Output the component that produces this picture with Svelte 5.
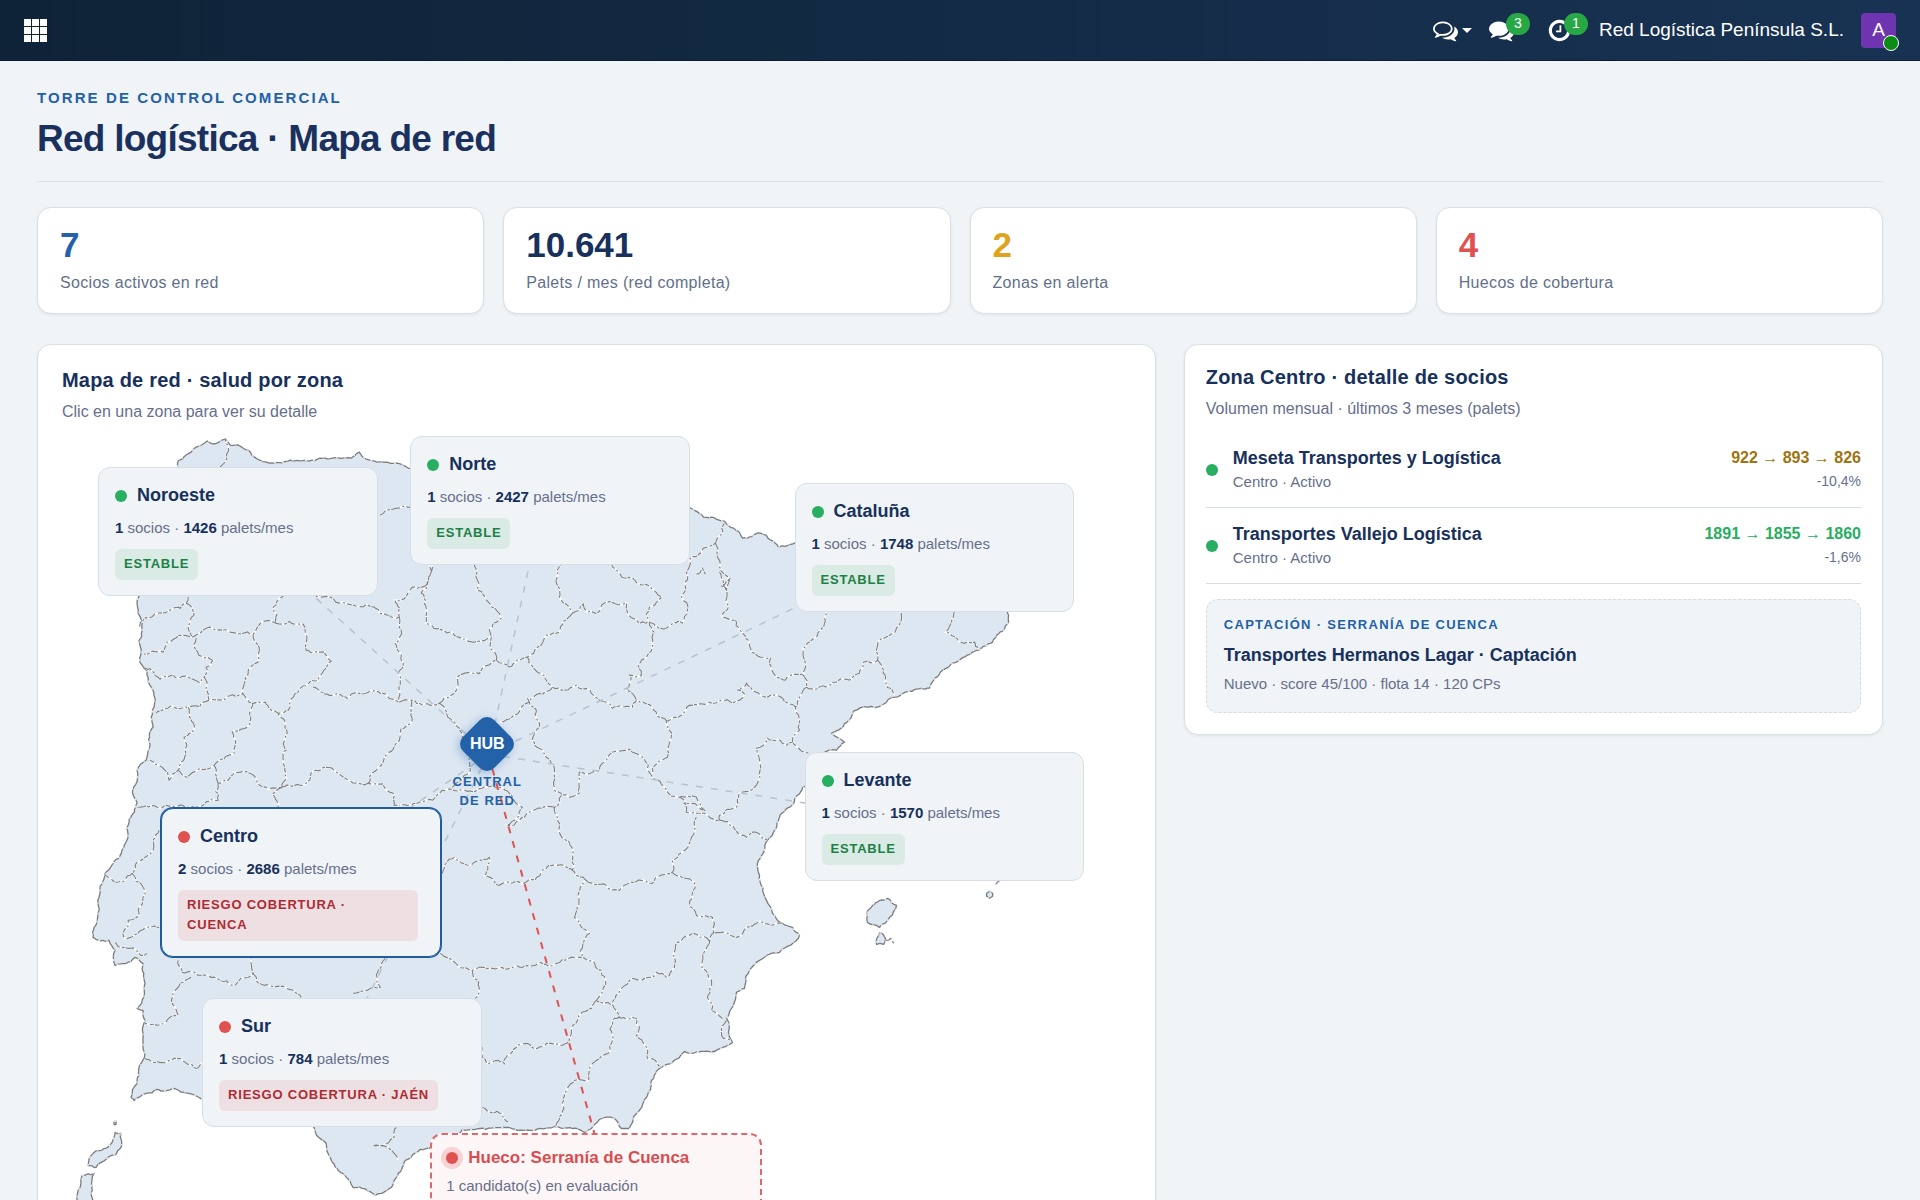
<script>
	// visible part of the map, in map units
	const view = { x: 63, y: 424, w: 1068, h: 850 };
	const hub = { x: 489, y: 754 };

	const stats = [
		{ value: '7', label: 'Socios activos en red', tone: 'blue' },
		{ value: '10.641', label: 'Palets / mes (red completa)', tone: 'navy' },
		{ value: '2', label: 'Zonas en alerta', tone: 'amber' },
		{ value: '4', label: 'Huecos de cobertura', tone: 'red' }
	];

	const zones = [
		{ name: 'Noroeste', x: 99, y: 467, socios: 1, palets: 1426, tag: 'Estable', tone: 'ok' },
		{ name: 'Norte', x: 411, y: 436, socios: 1, palets: 2427, tag: 'Estable', tone: 'ok' },
		{ name: 'Cataluña', x: 795, y: 483, socios: 1, palets: 1748, tag: 'Estable', tone: 'ok' },
		{ name: 'Levante', x: 805, y: 752, socios: 1, palets: 1570, tag: 'Estable', tone: 'ok' },
		{ name: 'Centro', x: 162, y: 808, socios: 2, palets: 2686, tag: 'Riesgo cobertura · Cuenca', tone: 'risk' },
		{ name: 'Sur', x: 203, y: 998, socios: 1, palets: 784, tag: 'Riesgo cobertura · Jaén', tone: 'risk' }
	];

	const links = [
		[246, 534],
		[550, 473],
		[935, 541],
		[944, 824],
		[302, 882],
		[342, 1050]
	];

	const partners = [
		{ name: 'Meseta Transportes y Logística', meta: 'Centro · Activo', trend: '922 → 893 → 826', delta: '-10,4%', tone: 'down' },
		{ name: 'Transportes Vallejo Logística', meta: 'Centro · Activo', trend: '1891 → 1855 → 1860', delta: '-1,6%', tone: 'flat' }
	];

	let selected = $state('Centro');

	const coast =
		'179,467 179,461 187,455 197,447 208,441 214,444 226,439 231,445 239,445 249,450 258,459 291,460 310,461 352,458 360,452 367,459 384,462 398,463 409,468 430,470 480,475 540,480 600,490 660,500 691,508 704,517 725,521 734,528 743,538 761,533 771,540 779,547 795,543 830,548 870,560 920,560 960,570 1000,580 1008,613 1009,622 1004,630 993,642 979,650 964,657 943,670 930,688 896,697 868,707 854,711 832,733 845,742 837,750 825,752 822,770 803,787 780,817 768,840 759,860 760,875 767,900 773,913 783,923 793,927 800,935 780,952 757,962 746,977 745,988 737,992 734,1005 727,1018 730,1037 733,1042 723,1047 702,1051 685,1051 673,1062 662,1067 652,1080 647,1097 640,1110 630,1128 622,1128 615,1118 600,1119 592,1128 585,1132 573,1128 555,1126 533,1130 510,1127 463,1129 460,1133 427,1148 406,1160 397,1177 392,1187 376,1195 354,1187 344,1173 331,1157 327,1143 315,1127 300,1115 270,1105 235,1112 215,1105 203,1099 190,1093 158,1089 147,1093 135,1100 132,1097 138,1083 140,1067 145,1058 144,1033 146,1020 144,1010 138,1008 146,983 144,963 136,957 116,965 116,950 110,940 94,937 95,927 100,910 101,890 106,873 120,858 129,837 138,803 138,770 147,760 154,727 155,707 149,677 140,640 138,603 140,596 135,570 128,540 140,500';

	const islands = [
		'867,913 873,905 888,898 897,905 890,917 880,927 868,922',
		'880,932 886,938 884,944 877,944',
		'122,1133 122,1147 108,1158 97,1167 89,1165 95,1152 113,1142 116,1132',
		'83,1175 95,1173 94,1200 90,1215 78,1215 79,1190',
		'990,891 993,893 993,896 990,898 987,896 987,893',
		'115,1121 117,1121 117,1124 115,1124'
	];

	const borders = [
		'189,597 187,603 159,613 140,629',
		'187,603 195,615 189,627 193,637 168,642 164,652 145,654',
		'193,637 210,627 231,632 254,634 262,622 276,623 274,607 283,597',
		'276,623 304,624 307,650 325,652 332,661 319,680 300,690 289,710 279,713 266,702 250,702 244,694 224,700 210,700 189,707 157,713',
		'197,638 197,650 214,660 205,677 210,700',
		'146,668 161,679 187,676 201,683 205,677',
		'254,634 260,647 249,673 244,694',
		'283,597 323,597 346,603 375,607 390,615 400,617 396,600 413,587 423,587 430,565',
		'400,617 402,630 396,643 404,663 399,673 399,702',
		'314,687 348,698 369,692 399,702 413,700 434,705 440,703 452,695 458,677 497,660 492,637 462,638 443,630 427,623 422,593 432,563',
		'475,563 478,590 490,603 502,618 490,630 492,637',
		'497,660 510,667 528,657 547,635 560,632 573,613 560,597 562,563',
		'573,613 584,604 588,612 598,613 605,603 627,603 633,618 647,623 650,607 662,597 633,578 587,563',
		'650,622 683,623 688,610 682,597 687,573 690,560 704,548 716,543 725,523',
		'716,543 720,567 730,580 729,607 723,617 736,620 746,638 761,657 771,658 777,677 786,680 804,675 805,660 804,648 821,630 826,611',
		'720,572 727,590 722,586 731,578',
		'697,574 703,568 706,574',
		'804,675 807,687 796,707 800,730 793,742 809,753',
		'807,687 829,686 850,680 864,662 878,660 880,640 895,633 900,611',
		'878,660 886,677 895,695',
		'955,611 946,632 961,642 975,642 979,649',
		'796,707 767,697 747,683 738,690 745,694 733,703 710,702 690,705 682,715 667,721',
		'650,622 653,643 642,660 642,675 630,675 627,690 637,700 653,708 667,721 671,740 668,757 658,763 652,775',
		'528,657 542,673 553,687 532,698 515,715 500,722',
		'553,687 577,685 600,700 613,708 633,707 637,700',
		'528,698 537,710 533,740 547,757 555,770 555,790 570,797 580,793 580,772 600,770 607,760 630,749 643,757 652,775 667,790 680,797 687,812 702,813 720,820 747,837 757,832 768,840',
		'680,797 697,797 705,810 684,803',
		'720,820 720,815 737,807 742,792 755,787 760,760 757,748 768,738 787,745 793,742',
		'562,795 555,807 560,823 573,848 573,870 587,880 580,897 575,917 590,933 583,957',
		'555,807 530,812 508,825 523,807 513,797 483,788 463,790 443,790 420,802 400,805',
		'440,703 453,720 463,738 470,760 470,773 453,787',
		'443,873 455,857 470,865 490,857 485,875 500,885 525,883 543,870 558,865 573,870',
		'587,880 607,885 620,890 635,882 653,883 673,872 673,860 690,843 697,817',
		'673,872 695,882 690,903 697,915 713,917 715,933 737,937 747,927 763,922 783,923',
		'715,932 710,943 697,934 678,942 675,967 667,977 657,972 645,978 633,978 622,988 613,1004 597,1000 604,987 602,970 593,960 582,957 557,963 540,962 523,967 503,967 473,970 460,967 440,952',
		'710,943 703,968 712,980 708,997 723,1018',
		'613,1004 620,1017 637,1018 637,1035 648,1058 662,1067',
		'620,1017 615,1018 613,1040 610,1052 593,1063 589,1080 575,1080 565,1093 563,1113 556,1126',
		'597,1000 592,1008 578,1020 570,1038 563,1045 547,1043 538,1048 528,1043 508,1055 505,1063 488,1063 483,1047',
		'473,970 480,990 476,998',
		'483,1107 503,1113 510,1122',
		'189,707 195,725 185,737 179,770 170,780 163,767 149,760',
		'179,770 188,777 215,765 235,753 233,732 251,723 254,703',
		'215,765 219,783 235,772 251,773 258,782 283,787 286,767 288,733 279,713',
		'219,783 219,800 197,807 161,808 138,807',
		'283,787 274,793 279,809',
		'283,787 304,785 329,767 354,783 369,783 394,793 395,805 400,805',
		'413,700 413,720 397,743 385,758 369,783',
		'160,830 154,850 133,873 117,882 106,875',
		'133,873 144,887 140,913 129,920 124,933 126,938 142,930 160,927',
		'116,942 130,948 142,955 148,953',
		'179,960 183,972 233,985 254,973 252,958',
		'254,973 265,985 286,987 302,997',
		'192,977 174,993 179,1015 158,1025 146,1023',
		'146,1058 163,1062 179,1058 197,1068 203,1062',
		'386,958 379,970 381,987 368,990 354,993',
		'397,1127 388,1143 374,1145 390,1148 399,1160',
		'221,467 226,440',
		'381,515 394,509 411,507',
		'727,1020 722,1032 724,1038 731,1040',
		'886,940 891,938 894,943',
		'996,884 1001,880'
	];

	let seed = 7;
	function random() {
		seed = (seed * 16807) % 2147483647;
		return seed / 2147483647 - 0.5;
	}

	// breaks a straight segment into small irregular steps
	function split(a, b, amount) {
		const dx = b[0] - a[0];
		const dy = b[1] - a[1];
		if (Math.hypot(dx, dy) < 4) return [b];
		const shift = random() * amount;
		const mid = [(a[0] + b[0]) / 2 - dy * shift, (a[1] + b[1]) / 2 + dx * shift];
		return [...split(a, mid, amount), ...split(mid, b, amount)];
	}

	function trace(line, amount, closed) {
		const points = line.split(' ').map((p) => p.split(',').map(Number));
		if (closed) points.push(points[0]);
		let all = [points[0]];
		for (let i = 1; i < points.length; i++) {
			all = all.concat(split(points[i - 1], points[i], amount));
		}
		return 'M' + all.map((p) => p[0].toFixed(1) + ' ' + p[1].toFixed(1)).join('L');
	}

	const land = [trace(coast, 0.25, true), ...islands.map((i) => trace(i, 0.3, true))].join('');
	const inner = borders.map((b) => trace(b, 0.36, false)).join('');

	const left = (x) => ((x - view.x) / view.w) * 100 + '%';
	const top = (y) => ((y - view.y) / view.h) * 100 + '%';
</script>

<header class="topbar">
	<button class="icon-button" aria-label="Aplicaciones">
		<svg width="23" height="23" viewBox="0 0 23 23">
			{#each [0, 8, 16] as y}
				{#each [0, 8, 16] as x}
					<rect {x} {y} width="7" height="7" />
				{/each}
			{/each}
		</svg>
	</button>

	<nav class="systray">
		<button class="icon-button" aria-label="Conversaciones">
			<svg width="25" height="25" viewBox="0 0 1792 1792">
				<path d="M704 384q-153 0-286 52t-211.5 141-78.5 191q0 82 53 158t149 132l97 56-35 84q34-20 62-39l44-31 53 10q78 14 153 14 153 0 286-52t211.5-141 78.5-191-78.5-191-211.5-141-286-52zm0-128q191 0 353.5 68.5t256.5 186.5 94 257-94 257-256.5 186.5-353.5 68.5q-86 0-176-16-124 88-278 128-36 9-86 16h-3q-11 0-20.5-8t-11.5-21q-1-3-1-6.5t.5-6.5 2-6l2.5-5 3.5-5.5 4-5 4.5-5 4-4.5q5-6 23-25t26-29.5 22.5-29 25-38.5 20.5-44q-124-72-195-177t-71-224q0-139 94-257t256.5-186.5 353.5-68.5zm822 1169q10 24 20.5 44t25 38.5 22.5 29 26 29.5 23 25q1 1 4 4.5t4.5 5 4 5 3.5 5.5l2.5 5 2 6 .5 6.5-1 6.5q-3 14-13 22t-22 7q-50-7-86-16-154-40-278-128-90 16-176 16-271 0-472-132 58 4 88 4 161 0 309-45t264-129q125-92 192-212t67-254q0-77-23-152 129 71 204 178t75 230q0 120-71 224.5t-195 176.5z" />
			</svg>
			<svg class="caret" width="10" height="5" viewBox="0 0 10 5"><path d="M0 0h10l-5 5z" /></svg>
		</button>
		<button class="icon-button" aria-label="Mensajes">
			<svg width="25" height="25" viewBox="0 0 1792 1792">
				<path d="M1408 768q0 139-94 257t-256.5 186.5-353.5 68.5q-86 0-176-16-124 88-278 128-36 9-86 16h-3q-11 0-20.5-8t-11.5-21q-1-3-1-6.5t.5-6.5 2-6l2.5-5 3.5-5.5 4-5 4.5-5 4-4.5q5-6 23-25t26-29.5 22.5-29 25-38.5 20.5-44q-124-72-195-177t-71-224q0-139 94-257t256.5-186.5 353.5-68.5 353.5 68.5 256.5 186.5 94 257zm384 256q0 120-71 224.5t-195 176.5q10 24 20.5 44t25 38.5 22.5 29 26 29.5 23 25q1 1 4 4.5t4.5 5 4 5 3.5 5.5l2.5 5 2 6 .5 6.5-1 6.5q-3 14-13 22t-22 7q-50-7-86-16-154-40-278-128-90 16-176 16-271 0-472-132 58 4 88 4 161 0 309-45t264-129q125-92 192-212t67-254q0-77-23-152 129 71 204 178t75 230z" />
			</svg>
			<span class="count">3</span>
		</button>
		<button class="icon-button" aria-label="Actividades">
			<svg width="25" height="25" viewBox="0 0 1792 1792">
				<path d="M1024 544v448q0 14-9 23t-23 9h-320q-14 0-23-9t-9-23v-64q0-14 9-23t23-9h224v-352q0-14 9-23t23-9h64q14 0 23 9t9 23zm416 352q0-148-73-273t-198-198-273-73-273 73-198 198-73 273 73 273 198 198 273 73 273-73 198-198 73-273zm224 0q0 209-103 385.5t-279.5 279.5-385.5 103-385.5-103-279.5-279.5-103-385.5 103-385.5 279.5-279.5 385.5-103 385.5 103 279.5 279.5 103 385.5z" />
			</svg>
			<span class="count">1</span>
		</button>
		<span class="company">Red Logística Península S.L.</span>
		<button class="avatar" aria-label="Usuario">A<span class="presence"></span></button>
	</nav>
</header>

<main>
	<div class="page-head">
		<p class="eyebrow">TORRE DE CONTROL COMERCIAL</p>
		<h1>Red logística · Mapa de red</h1>
	</div>

	<section class="stats">
		{#each stats as stat}
			<div class="stat">
				<strong class={stat.tone}>{stat.value}</strong>
				<span>{stat.label}</span>
			</div>
		{/each}
	</section>

	<div class="columns">
		<section class="panel map-panel">
			<h2>Mapa de red · salud por zona</h2>
			<p class="hint">Clic en una zona para ver su detalle</p>

			<div class="map">
				<svg viewBox="{view.x} {view.y} {view.w} {view.h}" aria-hidden="true">
					<path class="land" d={land} />
					<path class="gaps" d={inner} />
					<path class="border" d={inner} />
					<path class="coast-gaps" d={land} />
					{#each links as [x, y]}
						<line class="link" x1={hub.x} y1={hub.y} x2={x} y2={y} />
					{/each}
					<line class="link alert" x1={hub.x} y1={hub.y} x2="597" y2="1140" />
				</svg>

				<div class="hub" style="left: {left(488)}; top: {top(744)}">
					<div class="diamond"></div>
					<span class="hub-name">HUB</span>
					<span class="hub-label">CENTRAL<br />DE RED</span>
				</div>

				{#each zones as zone}
					<button
						class="zone"
						class:selected={selected === zone.name}
						style="left: {left(zone.x)}; top: {top(zone.y)}"
						onclick={() => (selected = zone.name)}
					>
						<span class="zone-name"><i class="dot {zone.tone}"></i>{zone.name}</span>
						<span class="zone-data"><b>{zone.socios}</b> socios · <b>{zone.palets}</b> palets/mes</span>
						<span class="tag {zone.tone}">{zone.tag}</span>
					</button>
				{/each}

				<button class="gap-card" style="left: {left(431)}; top: {top(1133)}">
					<span class="gap-name"><i class="dot risk halo"></i>Hueco: Serranía de Cuenca</span>
					<span class="gap-data">1 candidato(s) en evaluación</span>
				</button>
			</div>
		</section>

		<aside class="panel">
			<h2>Zona Centro · detalle de socios</h2>
			<p class="hint">Volumen mensual · últimos 3 meses (palets)</p>

			<ul>
				{#each partners as partner}
					<li>
						<i class="dot ok"></i>
						<div class="who">
							<b>{partner.name}</b>
							<span>{partner.meta}</span>
						</div>
						<div class="volume {partner.tone}">
							<b>{partner.trend}</b>
							<span>{partner.delta}</span>
						</div>
					</li>
				{/each}
			</ul>

			<div class="prospect">
				<p class="prospect-zone">CAPTACIÓN · SERRANÍA DE CUENCA</p>
				<p class="prospect-name">Transportes Hermanos Lagar · Captación</p>
				<p class="prospect-data">Nuevo · score 45/100 · flota 14 · 120 CPs</p>
			</div>
		</aside>
	</div>
</main>

<style>
	:global(body) {
		background: #f0f4f7;
		color: #17305c;
		font-family: 'Liberation Sans', Arial, sans-serif;
	}

	p,
	h1,
	h2,
	ul {
		margin: 0;
		padding: 0;
	}

	button {
		border: 0;
		background: none;
		color: inherit;
		cursor: pointer;
		font: inherit;
		padding: 0;
	}

	.topbar {
		align-items: center;
		background: linear-gradient(90deg, #0e2337, #183253);
		border-bottom: 1px solid #0b1d33;
		box-sizing: border-box;
		color: #fff;
		display: flex;
		height: 61px;
		justify-content: space-between;
		padding: 0 24px;
	}

	.topbar svg {
		display: block;
		fill: #fff;
	}

	.icon-button {
		align-items: center;
		display: flex;
		position: relative;
	}

	.caret {
		margin-left: 4px;
	}

	.systray {
		align-items: center;
		display: flex;
		gap: 17px;
	}

	.icon-button + .icon-button + .icon-button {
		margin-left: 16px;
	}

	.count {
		background: #28a745;
		border-radius: 11px;
		font-size: 14px;
		height: 22px;
		left: 17px;
		line-height: 21px;
		position: absolute;
		text-align: center;
		top: -5px;
		width: 24px;
	}

	.company {
		font-size: 19px;
		margin-left: 10px;
	}

	.avatar {
		background: #6f35b0;
		border-radius: 4px;
		font-size: 19px;
		height: 35px;
		position: relative;
		width: 35px;
	}

	.presence {
		background: #0b8a16;
		border: 1px solid #fff;
		border-radius: 50%;
		bottom: -3px;
		height: 14px;
		position: absolute;
		right: -3px;
		width: 14px;
	}

	main {
		padding: 27px 37px 40px;
	}

	.page-head {
		border-bottom: 1px solid #d9e0e7;
		margin-bottom: 25px;
		padding-bottom: 20px;
	}

	.eyebrow {
		color: #2361a9;
		font-size: 15px;
		font-weight: bold;
		letter-spacing: 0.14em;
		line-height: 20px;
	}

	h1 {
		color: #1a3160;
		font-size: 37px;
		letter-spacing: -0.02em;
		line-height: 44px;
		margin-top: 9px;
	}

	.stats {
		display: grid;
		gap: 19px;
		grid-template-columns: repeat(4, 1fr);
		margin-bottom: 30px;
	}

	.stat,
	.panel {
		background: #fff;
		border: 1px solid #d9e0e8;
		border-radius: 14px;
		box-shadow: 0 1px 3px rgba(23, 48, 92, 0.08);
	}

	.stat {
		padding: 20px 22px 18px;
	}

	.stat strong {
		display: block;
		font-size: 35px;
		line-height: 34px;
		margin-bottom: 9px;
	}

	.stat span {
		color: #627089;
		display: block;
		font-size: 16px;
		letter-spacing: 0.02em;
		line-height: 24px;
	}

	.blue {
		color: #2361a9;
	}

	.navy {
		color: #17305c;
	}

	.amber {
		color: #e0a31c;
	}

	.red {
		color: #e05252;
	}

	.columns {
		align-items: start;
		display: grid;
		gap: 28px;
		grid-template-columns: 1.6fr 1fr;
	}

	.panel {
		padding: 21px;
	}

	.map-panel {
		padding: 24px;
	}

	h2 {
		font-size: 20px;
		letter-spacing: 0.01em;
		line-height: 22px;
	}

	.hint {
		color: #666f8c;
		font-size: 16px;
		line-height: 24px;
		margin-top: 9px;
	}

	.map {
		position: relative;
	}

	.map svg {
		display: block;
		width: 100%;
	}

	.land {
		fill: #dde7f2;
		stroke: #7c7c7c;
		stroke-linejoin: round;
		stroke-width: 1.3;
	}

	.border,
	.gaps,
	.coast-gaps {
		fill: none;
		stroke: #808285;
		stroke-dasharray: 7 2 3 1 9 3 2 2 5 1 4 3;
		stroke-width: 1.2;
	}

	.gaps {
		stroke: #fff;
		stroke-dasharray: none;
		stroke-width: 1.8;
	}

	.coast-gaps {
		stroke: #e9eef4;
		stroke-dasharray: 2 9 1 12 2 6;
	}

	.link {
		stroke: #b8c2cf;
		stroke-dasharray: 7 8;
		stroke-width: 1.5;
	}

	.alert {
		stroke: #e05252;
		stroke-width: 2;
	}

	.hub {
		height: 0;
		position: absolute;
		width: 0;
	}

	.diamond {
		background: #2361a9;
		border-radius: 10px;
		box-shadow: 0 3px 10px rgba(35, 97, 169, 0.35);
		height: 44px;
		left: -22px;
		position: absolute;
		top: -22px;
		transform: rotate(45deg);
		width: 44px;
	}

	.hub-name,
	.hub-label {
		font-weight: bold;
		left: -50px;
		position: absolute;
		text-align: center;
		width: 100px;
	}

	.hub-name {
		color: #fff;
		font-size: 16px;
		line-height: 20px;
		top: -10px;
	}

	.hub-label {
		color: #2361a9;
		font-size: 13px;
		letter-spacing: 0.08em;
		line-height: 19px;
		top: 28px;
	}

	.zone {
		background: #f0f4f7;
		border: 1px solid #d8dee7;
		border-radius: 12px;
		box-sizing: border-box;
		padding: 15px 22px 15px 16px;
		position: absolute;
		text-align: left;
		width: calc(26% + 2px);
	}

	.selected {
		border-color: #1f5ca3;
		box-shadow: 0 0 0 1px #1f5ca3;
	}

	.zone-name,
	.gap-name {
		align-items: center;
		display: flex;
		font-size: 18px;
		font-weight: bold;
		gap: 10px;
		line-height: 25px;
	}

	.zone-data {
		color: #666f8c;
		display: block;
		font-size: 15px;
		line-height: 24px;
		margin: 8px 0 9px;
	}

	.zone-data b {
		color: #17305c;
	}

	.dot {
		border-radius: 50%;
		flex: none;
		height: 12px;
		width: 12px;
	}

	.dot.ok {
		background: #27ae60;
	}

	.dot.risk {
		background: #e05252;
	}

	.halo {
		box-shadow: 0 0 0 5px #f9d3d4;
	}

	.tag {
		border-radius: 6px;
		display: block;
		font-size: 13px;
		font-weight: bold;
		letter-spacing: 0.06em;
		line-height: 20px;
		padding: 5px 9px 6px;
		text-transform: uppercase;
		width: fit-content;
	}

	.tag.ok {
		background: #d9ebe4;
		color: #1d8046;
	}

	.tag.risk {
		background: #eddfe2;
		color: #b02a33;
	}

	.gap-card {
		background: #fdf6f6;
		border: 2px dashed #e0686c;
		border-radius: 12px;
		box-sizing: border-box;
		padding: 10px 14px 14px;
		position: absolute;
		text-align: left;
		width: 31%;
	}

	.gap-name {
		color: #d94c50;
		font-size: 17px;
	}

	.gap-data {
		color: #666f8c;
		display: block;
		font-size: 15px;
		line-height: 24px;
		margin-top: 4px;
	}

	ul {
		list-style: none;
		margin-top: 11px;
	}

	li {
		align-items: center;
		border-bottom: 1px solid #d5dbe2;
		display: flex;
		gap: 15px;
		padding: 14px 0;
	}

	.who {
		flex: 1;
	}

	.who b,
	.volume b {
		display: block;
		line-height: 24px;
	}

	.who b {
		font-size: 18px;
	}

	.who span,
	.volume span {
		color: #666f8c;
		display: block;
		font-size: 15px;
		line-height: 23px;
	}

	.volume {
		font-size: 16px;
		text-align: right;
	}

	.volume span {
		font-size: 14px;
	}

	.down b {
		color: #a07310;
	}

	.flat b {
		color: #27ae60;
	}

	.prospect {
		background: #f0f4f7;
		border: 1px dashed #d3dae2;
		border-radius: 12px;
		margin-top: 15px;
		padding: 17px;
	}

	.prospect-zone {
		color: #2361a9;
		font-size: 13px;
		font-weight: bold;
		letter-spacing: 0.1em;
		line-height: 16px;
	}

	.prospect-name {
		font-size: 18px;
		font-weight: bold;
		line-height: 24px;
		margin-top: 10px;
	}

	.prospect-data {
		color: #666f8c;
		font-size: 15px;
		line-height: 22px;
		margin-top: 6px;
	}
</style>
